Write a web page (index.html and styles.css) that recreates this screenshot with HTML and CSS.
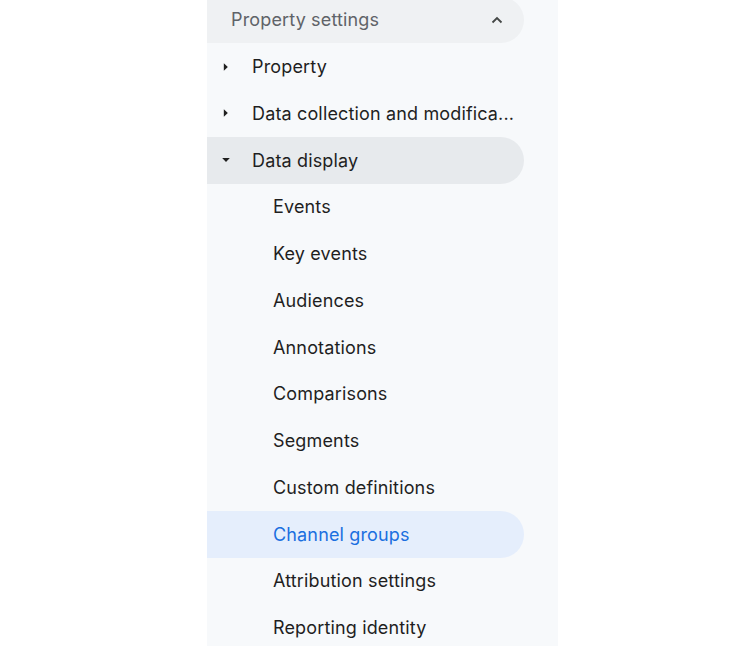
FILE: index.html
```html
<!DOCTYPE html>
<html>
<head>
<meta charset="utf-8">
<link rel="stylesheet" href="styles.css">
</head>
<body>
<div class="page">
  <nav class="panel">
    <div class="row header">
      <span class="label">Property settings</span>
      <svg class="chev" width="14" height="14" viewBox="0 0 14 14"><path d="M2.5 9.5 L7 5 L11.5 9.5" fill="none" stroke="#444746" stroke-width="1.8"/></svg>
    </div>
    <div class="row l1">
      <svg class="tri" width="10" height="10" viewBox="0 0 10 10"><path d="M2.8 1.2 L6.8 5 L2.8 8.8 Z" fill="#1f1f1f"/></svg>
      <span class="label">Property</span>
    </div>
    <div class="row l1">
      <svg class="tri" width="10" height="10" viewBox="0 0 10 10"><path d="M2.8 1.2 L6.8 5 L2.8 8.8 Z" fill="#1f1f1f"/></svg>
      <span class="label">Data collection and modifica...</span>
    </div>
    <div class="row l1 open">
      <svg class="tri" width="10" height="10" viewBox="0 0 10 10"><path d="M1.2 3 L8.8 3 L5 7 Z" fill="#1f1f1f"/></svg>
      <span class="label">Data display</span>
    </div>
    <div class="row l2"><span class="label">Events</span></div>
    <div class="row l2"><span class="label">Key events</span></div>
    <div class="row l2"><span class="label">Audiences</span></div>
    <div class="row l2"><span class="label">Annotations</span></div>
    <div class="row l2"><span class="label">Comparisons</span></div>
    <div class="row l2"><span class="label">Segments</span></div>
    <div class="row l2"><span class="label">Custom definitions</span></div>
    <div class="row l2 active"><span class="label">Channel groups</span></div>
    <div class="row l2"><span class="label">Attribution settings</span></div>
    <div class="row l2"><span class="label">Reporting identity</span></div>
  </nav>
</div>
</body>
</html>
```
FILE: styles.css
```css
html, body {
  margin: 0;
  padding: 0;
  background: #ffffff;
  height: 646px;
  overflow: hidden;
}
.page {
  display: flex;
  padding-left: 207px;
}
.panel {
  width: 351px;
  height: 660px;
  background: #f7f9fb;
  display: flex;
  flex-direction: column;
  font-family: Inter, Roboto, sans-serif;
  font-size: 18px;
  font-weight: 430;
  letter-spacing: 0.15px;
  color: #1f1f1f;
  margin-top: -3.5px;
}
.row {
  height: 46.75px;
  flex: none;
  display: flex;
  align-items: center;
  width: 317px;
  box-sizing: border-box;
  border-radius: 0 23.4px 23.4px 0;
  white-space: nowrap;
}
.header {
  background: #eff1f3;
  color: #5f6368;
  padding-left: 24px;
  justify-content: space-between;
  padding-right: 20px;
}
.l1 { padding-left: 14px; }
.l1 .tri { margin-right: 21px; }
.l2 { padding-left: 66px; }
.open { background: #e7eaed; }
.active { background: #e5eefc; color: #1a6fe0; }
```
